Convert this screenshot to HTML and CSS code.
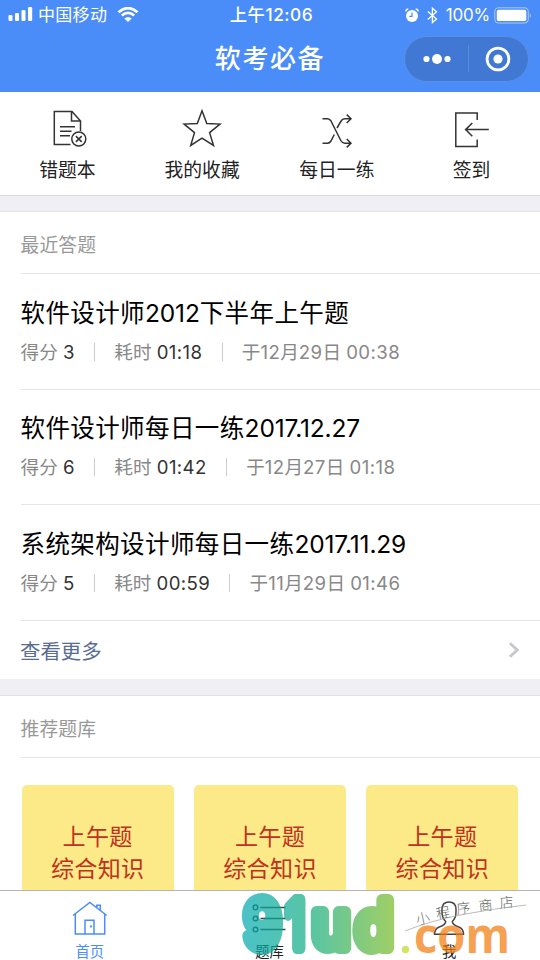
FILE: index.html
```html
<!DOCTYPE html>
<html lang="zh-CN">
<head>
<meta charset="utf-8">
<title>软考必备</title>
<link rel="stylesheet" href="styles.css">
</head>
<body>
<div class="phone">
  <header class="header">
    <div class="status">
      <div class="status-side">
        <svg class="signal" width="25" height="16" viewBox="0 0 25 16" fill="#fff"><rect x="0.5" y="8" width="4" height="6" rx="1.2"/><rect x="7" y="6" width="4" height="8" rx="1.2"/><rect x="13.5" y="3" width="4" height="11" rx="1.2"/><rect x="20" y="0" width="4.2" height="14" rx="1.2"/></svg>
        <span class="carrier">中国移动</span>
        <svg width="22" height="16" viewBox="0 0 22 16" fill="none" stroke="#fff" stroke-width="2.7"><path d="M1.5 5.2Q11-3 20.5 5.2"/><path d="M4.8 8.6Q11 3 17.2 8.6"/><path d="M11 15L7.3 11.5Q11 8.3 14.7 11.5Z" fill="#fff" stroke="none"/></svg>
      </div>
      <div class="clock">上午<span>12:06</span></div>
      <div class="status-side status-right">
        <svg width="14" height="15" viewBox="0 0 14 15"><circle cx="7" cy="8" r="6" fill="#fff"/><path d="M0.7 3.4Q1 1.2 3.3 1M10.7 1Q13 1.2 13.3 3.4" fill="none" stroke="#fff" stroke-width="1.5"/><path d="M7 4.5V8.3H4.2" fill="none" stroke="#4b8df8" stroke-width="1.2"/></svg>
        <svg class="bluetooth" width="11" height="17" viewBox="0 0 11 17" fill="none" stroke="#fff" stroke-width="1.3"><path d="M0.8 4.5L9.5 12L5.4 15.6V1.2L9.5 4.8L0.8 12.4"/></svg>
        <span class="percent">100%</span>
        <svg width="39" height="17" viewBox="0 0 39 17"><rect x="0.8" y="0.8" width="33.5" height="15.2" rx="3.4" fill="none" stroke="#a9c8fc" stroke-width="1"/><rect x="2.8" y="2.8" width="29.5" height="11.2" rx="1.6" fill="#fff"/><path d="M35.8 6Q38 8.4 35.8 11Z" fill="#a9c8fc"/></svg>
      </div>
    </div>
    <div class="navbar">
      <h1>软考必备</h1>
      <div class="capsule">
        <svg width="28" height="12" viewBox="0 0 28 12" fill="#fff"><circle cx="3.5" cy="6" r="3.1"/><circle cx="14" cy="6" r="5"/><circle cx="24.5" cy="6" r="3.1"/></svg>
        <i></i>
        <svg width="26" height="26" viewBox="0 0 26 26"><circle cx="13" cy="13" r="10.9" fill="none" stroke="#fff" stroke-width="2.8"/><circle cx="13" cy="13" r="4.6" fill="#fff"/></svg>
      </div>
    </div>
  </header>

  <nav class="shortcuts">
    <a><svg width="44" height="44" viewBox="0 0 44 44"><path d="M25.5 38.5H9.3V5.6H27L35.5 15V25M26.5 5.8V15H35.5M15 20.8H30M15 25.2H26.5M15 29.8H25" /><circle cx="33.8" cy="33" r="7"/><path d="M30.9 30.1L36.7 35.9M36.7 30.1L30.9 35.9" stroke-width="1.5"/></svg><span>错题本</span></a>
    <a><svg width="44" height="44" viewBox="0 0 44 44"><path d="M22 4.8L26.8 17.6L40 18.1L29.6 26.6L33.5 39.5L22 32.2L10.7 39.5L14.5 26.6L4.1 18.1L17.3 17.6Z"/></svg><span>我的收藏</span></a>
    <a><svg width="44" height="44" viewBox="0 0 44 44"><path d="M7.5 12.8H12.5Q14.7 12.8 16 15L25.8 34.5Q27.3 37.2 29.7 37.2H36M7.5 37.2H12.5Q14.7 37.2 16 35L19.3 28.5M22 22L25.8 15.5Q27.3 12.8 29.7 12.8H36M31.7 8.6L36 12.8L31.7 17M31.7 33L36 37.2L31.7 41.4"/></svg><span>每日一练</span></a>
    <a><svg width="44" height="44" viewBox="0 0 44 44"><path d="M27.2 14V6.9H5.8V40.4H27.2V33.5M38.8 23.6H15.7M22.3 17L15.6 23.6L22.3 30.2"/></svg><span>签到</span></a>
  </nav>

  <section class="panel">
    <h2>最近答题</h2>
    <article><h3>软件设计师<b>2012</b>下半年上午题</h3><p>得分 <em>3</em><i></i>耗时 <em>01:18</em><i></i>于<b>12</b>月<b>29</b>日 <b>00:38</b></p></article>
    <article><h3>软件设计师每日一练<b>2017.12.27</b></h3><p>得分 <em>6</em><i></i>耗时 <em>01:42</em><i></i>于<b>12</b>月<b>27</b>日 <b>01:18</b></p></article>
    <article><h3>系统架构设计师每日一练<b>2017.11.29</b></h3><p>得分 <em>5</em><i></i>耗时 <em>00:59</em><i></i>于<b>11</b>月<b>29</b>日 <b>01:46</b></p></article>
    <a class="more"><span>查看更多</span><svg width="14" height="18" viewBox="0 0 14 18"><path d="M3 2.3L10.2 9L3 15.7" fill="none" stroke="#c7c7cc" stroke-width="2.9"/></svg></a>
  </section>

  <section class="panel recommend">
    <h2>推荐题库</h2>
    <div class="cards">
      <div class="card">上午题<br>综合知识</div>
      <div class="card">上午题<br>综合知识</div>
      <div class="card">上午题<br>综合知识</div>
    </div>
  </section>

  <footer class="tabbar">
    <a class="active"><svg width="36" height="36" viewBox="0 0 36 36"><path d="M1 15.5L17.8 2.5L34.8 15.5M3.3 14V34H32.7V14M24.8 7.8V5.2H28.3V10.4M13 34V20.3H22V34"/><circle cx="19" cy="26.5" r=".4"/></svg><span>首页</span></a>
    <a><svg width="36" height="36" viewBox="0 0 36 36"><circle cx="4.5" cy="7.4" r="2.3"/><circle cx="4.5" cy="18.5" r="2.3"/><circle cx="4.5" cy="29.5" r="2.3"/><path d="M9.5 7.4H34.5M9.5 18.5H34.5M9.5 29.5H34.5"/></svg><span>题库</span></a>
    <a><svg width="36" height="36" viewBox="0 0 36 36"><path d="M3.5 34.3Q3.5 29 8.2 27Q14.7 24.7 14.7 21.5Q11 18 11 12V9.5Q11 2 18 2T25 9.5V12Q25 18 21.3 21.5Q21.3 24.7 27.8 27Q32.5 29 32.5 34.3Z"/></svg><span>我</span></a>
  </footer>

  <svg class="watermark" width="540" height="70" viewBox="0 890 540 70">
    <defs><linearGradient id="brand" gradientUnits="userSpaceOnUse" x1="243" y1="0" x2="393" y2="0"><stop offset="0" stop-color="#00a9af"/><stop offset=".45" stop-color="#10ad80"/><stop offset="1" stop-color="#77ba26"/></linearGradient></defs>
    <g opacity=".7">
      <g class="brand" fill="url(#brand)" stroke="url(#brand)">
        <text x="244" y="948" textLength="37" lengthAdjust="spacingAndGlyphs">9</text>
        <text x="286" y="948" textLength="19" lengthAdjust="spacingAndGlyphs">1</text>
        <text x="312" y="948" textLength="38" lengthAdjust="spacingAndGlyphs">u</text>
        <text x="355" y="948" textLength="38" lengthAdjust="spacingAndGlyphs">d</text>
      </g>
      <circle cx="405.5" cy="949.5" r="3.7" fill="#c4da2a"/>
      <text class="domain" x="414" y="953" textLength="96" lengthAdjust="spacingAndGlyphs">com</text>
    </g>
    <g class="script">
      <text transform="translate(417 925) rotate(-12)">小</text><text transform="translate(437 919) rotate(-10)">程</text><text transform="translate(457 914) rotate(-6)">序</text><text transform="translate(479 911) rotate(-5)">商</text><text transform="translate(500 908) rotate(-5)">店</text>
    </g>
    <path d="M405 931Q430 921 460 915T526 905" fill="none" stroke="#aaa" stroke-width=".8"/>
  </svg>
</div>
</body>
</html>
```
FILE: styles.css
```css
* { box-sizing: border-box; }
body, h1, h2, h3, p { margin: 0; font-weight: 400; }
body { width: 540px; height: 960px; overflow: hidden; background: #efeff4; font-family: Inter, "Noto Sans CJK SC", sans-serif; color: #222; }
svg { display: block; flex: none; }
b, em { font-weight: 400; font-style: normal; }
.phone { position: relative; height: 960px; display: flex; flex-direction: column; overflow: hidden; }
.header { height: 92px; flex: none; background: #4b8df8; color: #fff; }
.status { height: 30px; display: grid; grid-template-columns: 1fr auto 1fr; align-items: center; padding: 0 7px 0 8px; font-size: 17px; }
.status-side { display: flex; align-items: center; }
.status-right { justify-content: flex-end; }
.carrier { margin: -3px 10px 0 5px; letter-spacing: .3px; }
.clock { font-weight: 500; font-size: 17.3px; letter-spacing: .55px; margin: -3px 0 0 2px; }
.bluetooth { margin: 0 8px; }
.percent { font-size: 17px; letter-spacing: -.2px; margin-right: 4px; }
.navbar { height: 62px; display: grid; grid-template-columns: 1fr auto 1fr; align-items: center; padding: 0 11px 4px; }
h1 { grid-column: 2; font-size: 26px; font-weight: 500; letter-spacing: 1.6px; line-height: 38px; }
.capsule { justify-self: end; width: 125px; height: 46px; border: 1px solid #5a90e4; border-radius: 23px; background: #4078d3; display: flex; align-items: center; justify-content: space-between; padding: 0 17px 0 18px; margin-top: -1px; }
.capsule i { width: 1px; height: 27px; background: #5a8bdb; margin-left: 1px; }
.shortcuts { height: 104px; flex: none; background: #fff; border-bottom: 1px solid #d9d9de; display: grid; grid-template-columns: repeat(4, 1fr); padding: 14px 1px 0 0; }
.shortcuts a { display: flex; flex-direction: column; align-items: center; font-size: 18.8px; line-height: 28px; gap: 7px; }
.shortcuts svg { fill: none; stroke: #333; stroke-width: 1.5; }
.panel { margin-top: 15px; flex: none; background: #fff; border-top: 1px solid #e4e4e9; }
h2 { margin-left: 21px; height: 62px; line-height: 67px; font-size: 18.8px; letter-spacing: .1px; text-indent: -.5px; color: #999; border-bottom: 1px solid #e5e5e5; }
article { margin-left: 21px; height: 115.6px; border-bottom: 1px solid #e5e5e5; padding-top: 19.7px; }
h3 { color: #000; font-size: 24.5px; line-height: 38px; letter-spacing: .4px; margin-left: -.5px; white-space: nowrap; }
h3 b { letter-spacing: -.15px; }
article p { display: flex; align-items: center; white-space: pre; color: #888; font-size: 18.6px; line-height: 28px; margin: 6px 0 0 -.4px; }
article em { color: #333; letter-spacing: .4px; }
article p b { letter-spacing: .4px; }
article p i { width: 1px; height: 18px; background: #ccc; margin: 0 19.2px; }
.more { height: 58.2px; padding: 0 19px 0 20px; display: flex; align-items: center; justify-content: space-between; color: #586c94; font-size: 20.4px; }
.recommend { height: 270px; margin-top: 16px; border-color: #e0e0e5; }
.cards { display: grid; grid-template-columns: repeat(3, 1fr); gap: 20px; padding: 27px 21.5px 0 21.5px; }
.card { height: 152px; border-radius: 5px; background: #fce987; color: #c0321f; font-size: 23.1px; line-height: 32px; letter-spacing: .3px; text-align: center; padding-top: 36px; }
.tabbar { position: absolute; left: 0; right: 0; bottom: 0; height: 70px; background: #fff; border-top: 1px solid #b5b5b5; display: grid; grid-template-columns: repeat(3, 1fr); padding-right: 1px; }
.tabbar a { display: flex; flex-direction: column; align-items: center; padding-top: 9px; font-size: 14.3px; line-height: 22px; gap: 5px; }
.tabbar svg { fill: none; stroke: #444; stroke-width: 1.5; }
.tabbar .active { color: #4b8df8; }
.tabbar .active svg { stroke: #4b8df8; }
.watermark { position: absolute; left: 0; bottom: 0; overflow: visible; }
.brand { font: 500 66px Inter, sans-serif; stroke-width: 12px; stroke-linejoin: round; }
.domain { font: 700 48px "Open Sans", sans-serif; fill: #f17a08; }
.script { font: 300 14px "Noto Sans CJK SC", sans-serif; fill: #666; }
```
